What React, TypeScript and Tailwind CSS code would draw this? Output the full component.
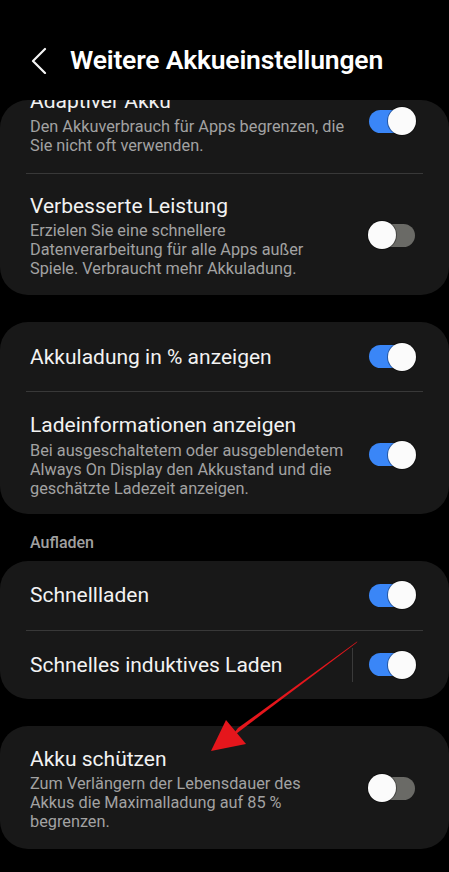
import { ReactNode } from "react";

function Toggle({ on }: { on: boolean }) {
  return (
    <div className="relative h-[23px] w-[46px] shrink-0">
      <div className={`absolute inset-0 rounded-full ${on ? "bg-[#3a86f7]" : "bg-[#6a6a66]"}`} />
      <div
        className={`absolute top-1/2 h-[28px] w-[28px] -translate-y-1/2 rounded-full bg-[#fbfbfb] shadow-[0_0_0_1px_rgba(0,0,0,0.35)] ${
          on ? "right-[-1px]" : "left-[-1px]"
        }`}
      />
    </div>
  );
}

interface RowProps {
  title: string;
  desc?: ReactNode;
  on: boolean;
  className?: string;
  divider?: boolean;
}

function Row({ title, desc, on, className, divider }: RowProps) {
  return (
    <div className={`flex items-center justify-between pl-[30px] pr-[34px] ${className ?? ""}`}>
      <div className="w-[330px]">
        <div className="text-[21px] leading-[26px] text-[#f2f2f2]">{title}</div>
        {desc && <div className="mt-[2.5px] text-[16.3px] leading-[19px] text-[#a2a2a2]">{desc}</div>}
      </div>
      <div className="flex items-center">
        {divider && <div className="mr-[16px] h-[34px] w-px bg-[#3a3a3a]" />}
        <Toggle on={on} />
      </div>
    </div>
  );
}

function Divider() {
  return <div className="mx-[26px] h-px bg-[#383838]" />;
}

function Card({ children }: { children: ReactNode }) {
  return <div className="overflow-hidden rounded-[28px] bg-[#181818]">{children}</div>;
}

export default function App() {
  return (
    <div
      className="relative h-[872px] w-[449px] overflow-hidden bg-black"
      style={{ fontFamily: "Roboto, 'Noto Sans', sans-serif" }}
    >
      {/* header */}
      <div className="flex h-[100px] items-start pt-[44px]">
        <svg width="70" height="30" viewBox="0 0 70 30" className="shrink-0">
          <path d="M45 5 L33 17 L45 29" fill="none" stroke="#f4f4f4" strokeWidth="2.2" strokeLinecap="round" strokeLinejoin="round" />
        </svg>
        <div className="text-[26.5px] font-semibold leading-[32px] tracking-[-0.2px] text-white">
          Weitere Akkueinstellungen
        </div>
      </div>

      <Card>
        <Row
          className="mt-[-31px] pb-[18px] pt-[19px]"
          title="Adaptiver Akku"
          on
          desc={
            <>
              Den Akkuverbrauch für Apps begrenzen, die
              <br />
              Sie nicht oft verwenden.
            </>
          }
        />
        <Divider />
        <Row
          className="pb-[17px] pt-[19px]"
          title="Verbesserte Leistung"
          on={false}
          desc={
            <>
              Erzielen Sie eine schnellere
              <br />
              Datenverarbeitung für alle Apps außer
              <br />
              Spiele. Verbraucht mehr Akkuladung.
            </>
          }
        />
      </Card>

      <div className="h-[27px]" />

      <Card>
        <Row className="h-[69px]" title="Akkuladung in % anzeigen" on />
        <Divider />
        <Row
          className="pb-[16px] pt-[20px]"
          title="Ladeinformationen anzeigen"
          on
          desc={
            <>
              Bei ausgeschaltetem oder ausgeblendetem
              <br />
              Always On Display den Akkustand und die
              <br />
              geschätzte Ladezeit anzeigen.
            </>
          }
        />
      </Card>

      <div className="flex h-[47px] items-center pl-[30px] pt-[11px] text-[16px] font-medium text-[#a0a0a0]">
        Aufladen
      </div>

      <Card>
        <Row className="h-[69px]" title="Schnellladen" on />
        <Divider />
        <Row className="h-[68px]" title="Schnelles induktives Laden" on divider />
      </Card>

      <div className="h-[27px]" />

      <Card>
        <Row
          className="pb-[18px] pt-[20px]"
          title="Akku schützen"
          on={false}
          desc={
            <>
              Zum Verlängern der Lebensdauer des
              <br />
              Akkus die Maximalladung auf 85 %
              <br />
              begrenzen.
            </>
          }
        />
      </Card>

      {/* red annotation arrow */}
      <svg className="pointer-events-none absolute left-0 top-0" width="449" height="872" viewBox="0 0 449 872">
        <polygon points="357.5,641.2 356.5,642.8 230,738.5 238,728" fill="#e5161c" />
        <polygon points="211,751 226,720 246,744" fill="#e5161c" />
      </svg>
    </div>
  );
}
